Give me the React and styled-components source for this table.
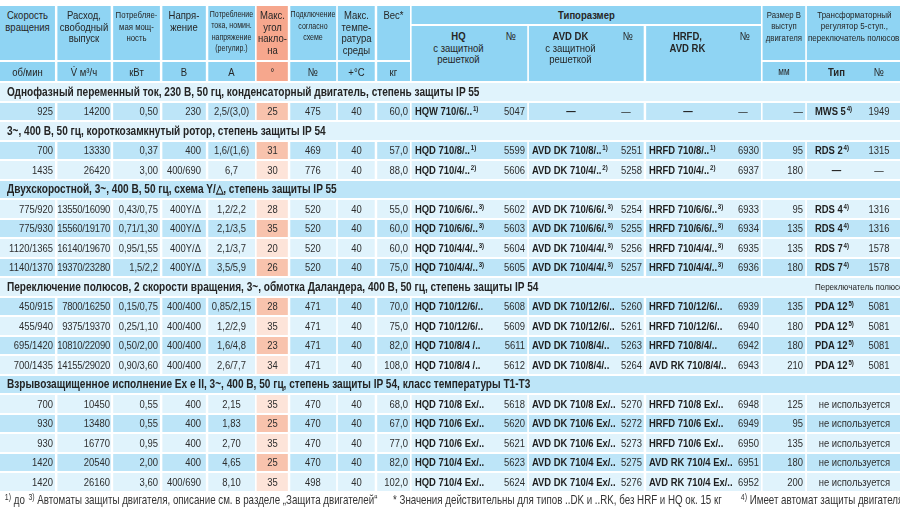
import styled, { createGlobalStyle } from 'styled-components';

// no narrow face is installed, so the whole sheet is condensed horizontally
const K = 0.82;
const u = (px) => `${(px / K).toFixed(2)}px`;

const GlobalStyle = createGlobalStyle`
  * { box-sizing: border-box; }
  html, body { margin: 0; padding: 0; background: #fff; overflow: hidden; }
  body {
    font-family: 'Liberation Sans', Arial, sans-serif;
    color: #2a2a2a;
  }
`;

const colors = {
  head: '#8fd4f3',
  dark: '#bde5f8',
  light: '#e0f3fc',
  salmonHead: '#f6a78d',
  salmonDark: '#f8c3ad',
  salmonLight: '#fde4d9',
};

const bg = (p) => {
  if (p.$salmon) return p.$dark ? colors.salmonDark : colors.salmonLight;
  return p.$dark ? colors.dark : colors.light;
};

const justify = { left: 'flex-start', center: 'center', right: 'flex-end' };

const columns = [55, 54, 47, 44, 47, 31, 46, 37, 33, 115, 115, 115, 42, 95];

const Sheet = styled.div`
  width: ${u(902)};
  padding-top: 6px;
  transform: scaleX(${K});
  transform-origin: 0 0;
`;

const Grid = styled.div`
  display: grid;
  grid-template-columns: ${columns.map(u).join(' ')};
  grid-template-rows: 18px 34px 19px;
  grid-auto-rows: 17.5px;
  row-gap: 2px;
  column-gap: ${u(2)};
`;

const HeadCell = styled.div`
  grid-row: span ${(p) => p.$rows || 1};
  grid-column: span ${(p) => p.$cols || 1};
  background: ${(p) => (p.$salmon ? colors.salmonHead : colors.head)};
  font-size: ${(p) => p.$size || 11.6}px;
  line-height: ${(p) => p.$lh || 11.7}px;
  font-weight: ${(p) => (p.$bold ? 700 : 400)};
  padding-top: ${(p) => p.$pt ?? 3}px;
  text-align: center;
  white-space: nowrap;
  overflow: hidden;
  color: #262626;
`;

const UnitCell = styled(HeadCell)`
  line-height: 19px;
  padding-top: 0;
`;

const ModelHead = styled(HeadCell)`
  grid-row: span 2;
  display: flex;
  padding-top: 4px;
`;

const ModelHeadName = styled.div`
  flex: 1;
  text-align: center;
  padding-left: ${(p) => u(p.$shift || 0)};
`;

const ModelHeadNo = styled.div`
  width: ${u(32)};
  text-align: center;
`;

const Strong = styled.b`
  font-weight: 700;
`;

const TransHead = styled(HeadCell)`
  text-align: left;
  padding-left: ${u(1)};
`;

const TransLine = styled.div`
  width: ${u(93)};
  text-align: center;
`;

const TypeHead = styled(UnitCell)`
  display: flex;
  padding: 0 ${u(5)};
`;

const TypeHeadPart = styled.div`
  flex: ${(p) => (p.$grow ? 1 : 'none')};
  width: ${(p) => (p.$grow ? 'auto' : u(36))};
  text-align: center;
  font-weight: ${(p) => (p.$bold ? 700 : 400)};
`;

const Section = styled.div`
  grid-column: 1 / -1;
  background: ${bg};
  display: flex;
  justify-content: space-between;
  align-items: center;
  padding-left: ${u(7)};
  font-size: 12.3px;
  font-weight: 700;
  white-space: nowrap;
  overflow: hidden;
  color: #242424;
`;

const SectionNote = styled.span`
  width: ${u(87)};
  font-size: 9.8px;
  font-weight: 400;
  overflow: hidden;
`;

const Cell = styled.div`
  background: ${bg};
  display: flex;
  align-items: center;
  justify-content: ${(p) => justify[p.$align || 'center']};
  font-size: 11.5px;
  letter-spacing: ${(p) => (p.$tight ? '-0.25px' : 'normal')};
  padding: 0 ${(p) => u(p.$pr ?? 2)} 0 ${(p) => u(p.$tight ? 0 : 2)};
  white-space: nowrap;
  overflow: hidden;
  color: #2e2e2e;
`;

const ModelCell = styled.div`
  background: ${bg};
  display: flex;
  align-items: center;
  font-size: 11.5px;
  padding: 0 ${u(2)} 0 ${u(3)};
  white-space: nowrap;
  overflow: hidden;
  color: #2e2e2e;
`;

const ModelName = styled.span`
  flex: 1;
  font-weight: 700;
  color: #1f1f1f;
  text-align: ${(p) => (p.$dash ? 'center' : 'left')};
`;

const ModelNo = styled.span`
  width: ${u(32)};
  text-align: ${(p) => (p.$dash ? 'center' : 'right')};
`;

const TypeCell = styled(ModelCell)`
  padding: 0 ${u(5)};
`;

const TypeName = styled.span`
  flex: 1;
  font-weight: 700;
  color: #1f1f1f;
  text-align: ${(p) => (p.$dash ? 'center' : 'left')};
  padding-left: ${(p) => (p.$dash ? 0 : u(3))};
`;

const TypeNo = styled.span`
  width: ${u(36)};
  text-align: center;
`;

const Sup = styled.sup`
  font-size: 7.5px;
  line-height: 0;
  vertical-align: 4px;
  margin-left: 1px;
`;

const Notes = styled.div`
  display: flex;
  margin-top: 2px;
  padding-left: ${u(4)};
  font-size: 11.9px;
  line-height: 14px;
  white-space: nowrap;
  color: #333;
`;

const Note = styled.span`
  flex: none;
  width: ${(p) => (p.$w ? u(p.$w) : 'auto')};
`;

const NoteSup = styled(Sup)`
  font-size: 8.5px;
  vertical-align: 4px;
`;

const D = '—';

const sections = [
  {
    title: 'Однофазный переменный ток, 230 В, 50 гц, конденсаторный двигатель, степень защиты IP 55',
    rows: [
      ['925', '14200', '0,50', '230', '2,5/(3,0)', '25', '475', '40', '60,0', ['HQW 710/6/..', '1)', '5047'], [D, '', D], [D, '', D], D, ['MWS 5', '4)', '1949']],
    ],
  },
  {
    title: '3~, 400 В, 50 гц, короткозамкнутый ротор, степень защиты IP 54',
    rows: [
      ['700', '13330', '0,37', '400', '1,6/(1,6)', '31', '469', '40', '57,0', ['HQD 710/8/..', '1)', '5599'], ['AVD DK 710/8/..', '1)', '5251'], ['HRFD 710/8/..', '1)', '6930'], '95', ['RDS 2', '4)', '1315']],
      ['1435', '26420', '3,00', '400/690', '6,7', '30', '776', '40', '88,0', ['HQD 710/4/..', '2)', '5606'], ['AVD DK 710/4/..', '2)', '5258'], ['HRFD 710/4/..', '2)', '6937'], '180', [D, '', D]],
    ],
  },
  {
    title: 'Двухскоростной, 3~, 400 В, 50 гц, схема Y/△, степень защиты IP 55',
    rows: [
      ['775/920', '13550/16090', '0,43/0,75', '400Y/Δ', '1,2/2,2', '28', '520', '40', '55,0', ['HQD 710/6/6/..', '3)', '5602'], ['AVD DK 710/6/6/.', '3)', '5254'], ['HRFD 710/6/6/..', '3)', '6933'], '95', ['RDS 4', '4)', '1316']],
      ['775/930', '15560/19170', '0,71/1,30', '400Y/Δ', '2,1/3,5', '35', '520', '40', '60,0', ['HQD 710/6/6/..', '3)', '5603'], ['AVD DK 710/6/6/.', '3)', '5255'], ['HRFD 710/6/6/..', '3)', '6934'], '135', ['RDS 4', '4)', '1316']],
      ['1120/1365', '16140/19670', '0,95/1,55', '400Y/Δ', '2,1/3,7', '20', '520', '40', '60,0', ['HQD 710/4/4/..', '3)', '5604'], ['AVD DK 710/4/4/.', '3)', '5256'], ['HRFD 710/4/4/..', '3)', '6935'], '135', ['RDS 7', '4)', '1578']],
      ['1140/1370', '19370/23280', '1,5/2,2', '400Y/Δ', '3,5/5,9', '26', '520', '40', '75,0', ['HQD 710/4/4/..', '3)', '5605'], ['AVD DK 710/4/4/.', '3)', '5257'], ['HRFD 710/4/4/..', '3)', '6936'], '180', ['RDS 7', '4)', '1578']],
    ],
  },
  {
    title: 'Переключение полюсов, 2 скорости вращения, 3~, обмотка Даландера, 400 В, 50 гц, степень защиты IP 54',
    note: 'Переключатель полюсов',
    rows: [
      ['450/915', '7800/16250', '0,15/0,75', '400/400', '0,85/2,15', '28', '471', '40', '70,0', ['HQD 710/12/6/..', '', '5608'], ['AVD DK 710/12/6/..', '', '5260'], ['HRFD 710/12/6/..', '', '6939'], '135', ['PDA 12', '5)', '5081']],
      ['455/940', '9375/19370', '0,25/1,10', '400/400', '1,2/2,9', '35', '471', '40', '75,0', ['HQD 710/12/6/..', '', '5609'], ['AVD DK 710/12/6/..', '', '5261'], ['HRFD 710/12/6/..', '', '6940'], '180', ['PDA 12', '5)', '5081']],
      ['695/1420', '10810/22090', '0,50/2,00', '400/400', '1,6/4,8', '23', '471', '40', '82,0', ['HQD 710/8/4 /..', '', '5611'], ['AVD DK 710/8/4/..', '', '5263'], ['HRFD 710/8/4/..', '', '6942'], '180', ['PDA 12', '5)', '5081']],
      ['700/1435', '14155/29020', '0,90/3,60', '400/400', '2,6/7,7', '34', '471', '40', '108,0', ['HQD 710/8/4 /..', '', '5612'], ['AVD DK 710/8/4/..', '', '5264'], ['AVD RK 710/8/4/..', '', '6943'], '210', ['PDA 12', '5)', '5081']],
    ],
  },
  {
    title: 'Взрывозащищенное исполнение Ex e II, 3~, 400 В, 50 гц, степень защиты IP 54, класс температуры T1-T3',
    rows: [
      ['700', '10450', '0,55', '400', '2,15', '35', '470', '40', '68,0', ['HQD 710/8 Ex/..', '', '5618'], ['AVD DK 710/8 Ex/..', '', '5270'], ['HRFD 710/8 Ex/..', '', '6948'], '125', 'не используется'],
      ['930', '13480', '0,55', '400', '1,83', '25', '470', '40', '67,0', ['HQD 710/6 Ex/..', '', '5620'], ['AVD DK 710/6 Ex/..', '', '5272'], ['HRFD 710/6 Ex/..', '', '6949'], '95', 'не используется'],
      ['930', '16770', '0,95', '400', '2,70', '35', '470', '40', '77,0', ['HQD 710/6 Ex/..', '', '5621'], ['AVD DK 710/6 Ex/..', '', '5273'], ['HRFD 710/6 Ex/..', '', '6950'], '135', 'не используется'],
      ['1420', '20540', '2,00', '400', '4,65', '25', '470', '40', '82,0', ['HQD 710/4 Ex/..', '', '5623'], ['AVD DK 710/4 Ex/..', '', '5275'], ['AVD RK 710/4 Ex/..', '', '6951'], '180', 'не используется'],
      ['1420', '26160', '3,60', '400/690', '8,10', '35', '498', '40', '102,0', ['HQD 710/4 Ex/..', '', '5624'], ['AVD DK 710/4 Ex/..', '', '5276'], ['AVD RK 710/4 Ex/..', '', '6952'], '200', 'не используется'],
    ],
  },
];

// alignment and right padding of the nine plain value columns
const aligns = ['right', 'right', 'right', 'right', 'center', 'center', 'center', 'center', 'right'];
const pads = [2, 1, 2, 5, 2, 2, 2, 2, 2];

function Model({ data, dark }) {
  const [name, sup, no] = data;
  const dash = name === D;
  return (
    <ModelCell $dark={dark}>
      <ModelName $dash={dash}>
        {name}
        {sup && <Sup>{sup}</Sup>}
      </ModelName>
      <ModelNo $dash={dash}>{no}</ModelNo>
    </ModelCell>
  );
}

function Regulator({ data, dark }) {
  if (typeof data === 'string') {
    return <Cell $dark={dark}>{data}</Cell>;
  }
  const [name, sup, no] = data;
  const dash = name === D;
  return (
    <TypeCell $dark={dark}>
      <TypeName $dash={dash}>
        {name}
        {sup && <Sup>{sup}</Sup>}
      </TypeName>
      <TypeNo>{no}</TypeNo>
    </TypeCell>
  );
}

function DataRow({ row, dark }) {
  const plain = row.slice(0, 9);
  return (
    <>
      {plain.map((v, i) => (
        <Cell
          key={i}
          $dark={dark}
          $salmon={i === 5}
          $align={aligns[i]}
          $pr={pads[i]}
          $tight={v.length > 9}
        >
          {v}
        </Cell>
      ))}
      <Model data={row[9]} dark={dark} />
      <Model data={row[10]} dark={dark} />
      <Model data={row[11]} dark={dark} />
      <Cell $dark={dark} $align="right">{row[12]}</Cell>
      <Regulator data={row[13]} dark={dark} />
    </>
  );
}

function Header() {
  return (
    <>
      <HeadCell $rows={2}>Скорость<br />вращения</HeadCell>
      <HeadCell $rows={2}>Расход,<br />свободный<br />выпуск</HeadCell>
      <HeadCell $rows={2} $size={9.5} $lh={11.7}>Потребляе-<br />мая мощ-<br />ность</HeadCell>
      <HeadCell $rows={2}>Напря-<br />жение</HeadCell>
      <HeadCell $rows={2} $size={8.6} $lh={11.4}>Потребление<br />тока, номин.<br />напряжение<br />(регулир.)</HeadCell>
      <HeadCell $rows={2} $salmon>Макс.<br />угол<br />накло-<br />на</HeadCell>
      <HeadCell $rows={2} $size={8.6} $lh={11.7}>Подключение<br />согласно<br />схеме</HeadCell>
      <HeadCell $rows={2}>Макс.<br />темпе-<br />ратура<br />среды</HeadCell>
      <HeadCell $rows={2}>Вес*</HeadCell>
      <HeadCell $cols={3} $bold $lh={18} $pt={0}>Типоразмер</HeadCell>
      <HeadCell $rows={2} $size={9.5} $lh={11.4}>Размер В<br />выступ<br />двигателя</HeadCell>
      <TransHead $rows={2} $size={9.8} $lh={11.4}>
        <TransLine>Трансформаторный</TransLine>
        <TransLine>регулятор 5-ступ.,</TransLine>
        <div>переключатель полюсов</div>
      </TransHead>

      <ModelHead>
        <ModelHeadName $shift={10}><Strong>HQ</Strong><br />с защитной<br />решеткой</ModelHeadName>
        <ModelHeadNo>№</ModelHeadNo>
      </ModelHead>
      <ModelHead>
        <ModelHeadName><Strong>AVD DK</Strong><br />с защитной<br />решеткой</ModelHeadName>
        <ModelHeadNo>№</ModelHeadNo>
      </ModelHead>
      <ModelHead>
        <ModelHeadName><Strong>HRFD,<br />AVD RK</Strong></ModelHeadName>
        <ModelHeadNo>№</ModelHeadNo>
      </ModelHead>

      <UnitCell>об/мин</UnitCell>
      <UnitCell>V&#775; м³/ч</UnitCell>
      <UnitCell>кВт</UnitCell>
      <UnitCell>В</UnitCell>
      <UnitCell>А</UnitCell>
      <UnitCell $salmon>°</UnitCell>
      <UnitCell>№</UnitCell>
      <UnitCell>+°C</UnitCell>
      <UnitCell>кг</UnitCell>
      <UnitCell $size={10}>мм</UnitCell>
      <TypeHead>
        <TypeHeadPart $grow $bold>Тип</TypeHeadPart>
        <TypeHeadPart>№</TypeHeadPart>
      </TypeHead>
    </>
  );
}

export default function App() {
  let index = 0;
  const body = [];
  sections.forEach((s, si) => {
    const dark = index % 2 === 1;
    index += 1;
    body.push(
      <Section key={`s${si}`} $dark={dark}>
        <span>{s.title}</span>
        {s.note && <SectionNote>{s.note}</SectionNote>}
      </Section>
    );
    s.rows.forEach((r, ri) => {
      const d = index % 2 === 1;
      index += 1;
      body.push(<DataRow key={`r${si}-${ri}`} row={r} dark={d} />);
    });
  });

  return (
    <Sheet>
      <GlobalStyle />
      <Grid>
        <Header />
        {body}
      </Grid>
      <Notes>
        <Note $w={389}>
          <NoteSup>1)</NoteSup> до <NoteSup>3)</NoteSup> Автоматы защиты двигателя, описание см. в разделе „Защита двигателей“
        </Note>
        <Note $w={347}>* Значения действительны для типов ..DK и ..RK, без HRF и HQ ок. 15 кг</Note>
        <Note>
          <NoteSup>4)</NoteSup> Имеет автомат защиты двигателя
        </Note>
      </Notes>
    </Sheet>
  );
}
